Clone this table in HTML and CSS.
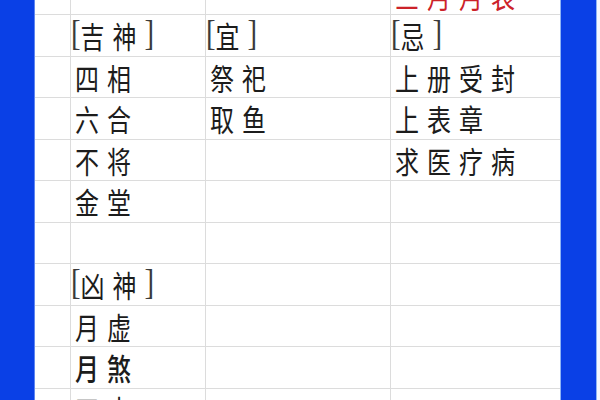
FILE: index.html
```html
<!DOCTYPE html>
<html lang="zh">
<head>
<meta charset="utf-8">
<link rel="stylesheet" href="styles.css">
</head>
<body>
<div class="page">
  <div class="bar bar-left"></div>
  <div class="sheet">
    <div class="c"></div><div class="c"></div><div class="c"></div><div class="c top"><span class="t red">三月月表</span></div>

    <div class="c"></div><div class="c h"><span class="t"><span class="br">[</span>吉神<span class="br">]</span></span></div><div class="c h"><span class="t"><span class="br">[</span>宜<span class="br">]</span></span></div><div class="c h"><span class="t"><span class="br">[</span>忌<span class="br">]</span></span></div>

    <div class="c"></div><div class="c"><span class="t">四相</span></div><div class="c"><span class="t">祭祀</span></div><div class="c"><span class="t">上册受封</span></div>

    <div class="c"></div><div class="c"><span class="t">六合</span></div><div class="c"><span class="t">取鱼</span></div><div class="c"><span class="t">上表章</span></div>

    <div class="c"></div><div class="c"><span class="t">不将</span></div><div class="c"></div><div class="c"><span class="t">求医疗病</span></div>

    <div class="c"></div><div class="c"><span class="t">金堂</span></div><div class="c"></div><div class="c"></div>

    <div class="c"></div><div class="c"></div><div class="c"></div><div class="c"></div>

    <div class="c"></div><div class="c h"><span class="t"><span class="br">[</span>凶神<span class="br">]</span></span></div><div class="c"></div><div class="c"></div>

    <div class="c"></div><div class="c"><span class="t">月虚</span></div><div class="c"></div><div class="c"></div>

    <div class="c"></div><div class="c"><span class="t bold">月煞</span></div><div class="c"></div><div class="c"></div>

    <div class="c"></div><div class="c"><span class="t">四击</span></div><div class="c"></div><div class="c"></div>
  </div>
  <div class="bar bar-right"></div>
  <div class="edge"></div>
</div>
</body>
</html>
```

FILE: styles.css
```css
html, body {
  margin: 0;
  padding: 0;
  background: #ffffff;
}

.page {
  display: flex;
  width: 600px;
  height: 400px;
  overflow: hidden;
}

.bar {
  flex: none;
  height: 100%;
  background: #0a40e6;
}

.bar-left {
  width: 35px;
  box-shadow: inset -1px 0 0 #5f86f0;
}

.bar-right {
  width: 37px;
  box-shadow: inset 1px 0 0 #8fb4f5, inset -1px 0 0 #8fb4f5;
}

.edge {
  flex: none;
  width: 3px;
  background: #f4f8ff;
}

.sheet {
  flex: none;
  width: 525px;
  height: 420px;
  display: grid;
  grid-template-columns: 35px 134px 184px 169px;
  grid-template-rows: 14px;
  grid-auto-rows: 40.5px;
  gap: 1px;
  align-content: start;
  background: #dcdcdc;
  overflow: hidden;
}

.c {
  background: #ffffff;
  display: flex;
  align-items: center;
  padding-left: 4px;
  min-width: 0;
}

.c.h {
  padding-left: 0;
}

.c.top {
  align-items: flex-end;
  overflow: hidden;
}

.t {
  display: inline-block;
  font-family: "Noto Sans CJK SC", "Noto Sans", sans-serif;
  font-size: 30px;
  line-height: 36px;
  letter-spacing: 10px;
  color: #1c1c1c;
  white-space: nowrap;
  transform: scaleX(0.8);
  transform-origin: left center;
}

.t.bold {
  font-weight: 500;
}

.br {
  font-family: "Liberation Serif", serif;
  font-size: 36px;
  line-height: 36px;
  color: #3a3a3a;
  letter-spacing: 0;
  vertical-align: top;
  position: relative;
  top: -2px;
}

.t.red {
  color: #cc2229;
  line-height: 30px;
  margin-bottom: 4px;
}
```
